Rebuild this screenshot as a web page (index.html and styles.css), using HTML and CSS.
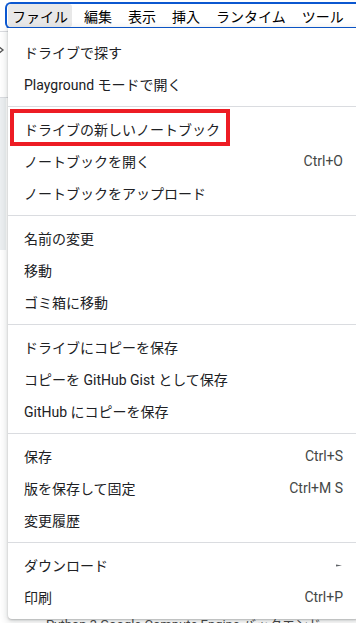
FILE: index.html
```html
<!DOCTYPE html>
<html lang="ja">
  <head>
    <meta charset="UTF-8" />
    <meta name="viewport" content="width=device-width, initial-scale=1.0" />
    <title>ファイル メニュー</title>
    <link rel="stylesheet" href="styles.css">
  </head>
  <body>
    <div class="menubar">
      <div class="menubar-item active">ファイル</div>
      <div class="menubar-item">編集</div>
      <div class="menubar-item">表示</div>
      <div class="menubar-item">挿入</div>
      <div class="menubar-item">ランタイム</div>
      <div class="menubar-item">ツール</div>
    </div>

    <div class="workspace">
      <div class="side">
        <div class="side-top">
          <svg width="8" height="10" viewBox="0 0 8 10"><polyline points="0,1 5,5 0,9" fill="none" stroke="#555" stroke-width="1.3" /></svg>
        </div>
        <div class="side-strip"></div>
      </div>
      <div class="sheet"></div>
      <div class="status">Python 3 Google Compute Engine バックエンド</div>
    </div>

    <div class="menu">
      <div class="menu-item">ドライブで探す</div>
      <div class="menu-item">Playground モードで開く</div>
      <div class="menu-sep"></div>
      <div class="menu-item marked">ドライブの新しいノートブック</div>
      <div class="menu-item">ノートブックを開く<span class="shortcut">Ctrl+O</span></div>
      <div class="menu-item">ノートブックをアップロード</div>
      <div class="menu-sep"></div>
      <div class="menu-item">名前の変更</div>
      <div class="menu-item">移動</div>
      <div class="menu-item">ゴミ箱に移動</div>
      <div class="menu-sep"></div>
      <div class="menu-item">ドライブにコピーを保存</div>
      <div class="menu-item">コピーを GitHub Gist として保存</div>
      <div class="menu-item">GitHub にコピーを保存</div>
      <div class="menu-sep"></div>
      <div class="menu-item">保存<span class="shortcut">Ctrl+S</span></div>
      <div class="menu-item">版を保存して固定<span class="shortcut">Ctrl+M S</span></div>
      <div class="menu-item">変更履歴</div>
      <div class="menu-sep"></div>
      <div class="menu-item">ダウンロード
        <svg class="submenu" width="6" height="5" viewBox="0 0 6 5"><polygon points="0,1.5 6,2.5 0,3.5" fill="#5f6368" /></svg>
      </div>
      <div class="menu-item">印刷<span class="shortcut">Ctrl+P</span></div>
    </div>
  </body>
</html>
```

FILE: styles.css
```css
body {
  margin: 0;
  height: 623px;
  overflow: hidden;
  background-color: white;
  font-family: Roboto, "Noto Sans CJK JP", sans-serif;
  font-size: 14px;
  color: #202124;
}
.menubar {
  box-sizing: border-box;
  height: 27px;
  margin: 2px 0 0 5px;
  padding-left: 1px;
  border: 2px solid #0b57d0;
  border-right: none;
  border-radius: 6px 0 0 6px;
  display: flex;
  gap: 8px;
}
.menubar-item {
  padding: 0 4px;
  display: flex;
  align-items: center;
  color: #000;
  border-radius: 3px;
}
.menubar-item.active {
  background-color: #e8e8e8;
}
.workspace {
  margin-top: 2px;
  border-top: 1px solid #dadce0;
  position: relative;
}
.side {
  width: 8px;
}
.side-top {
  height: 66px;
  border-bottom: 1px solid #dadce0;
  padding-top: 13px;
  box-sizing: border-box;
  margin-left: -2px;
}
.side-top svg {
  display: block;
}
.side-strip {
  width: 6px;
  height: 152px;
  background-color: #eceff1;
}
.sheet {
  height: 366px;
}
.status {
  padding-left: 46px;
  font-size: 13px;
  line-height: 18px;
  color: #444;
}
.menu {
  position: absolute;
  top: 28px;
  left: 8px;
  width: 351px;
  padding: 8px 0 6px;
  background-color: white;
  border-radius: 0 0 4px 4px;
  box-shadow: 0 1px 2px rgba(60, 64, 67, 0.3), 0 2px 6px 2px rgba(60, 64, 67, 0.15);
}
.menu-item {
  position: relative;
  height: 32px;
  padding: 0 16px;
  display: flex;
  align-items: center;
  justify-content: space-between;
  white-space: nowrap;
}
.shortcut {
  color: #444746;
}
.submenu {
  margin-right: 1px;
}
.menu-sep {
  height: 1px;
  margin: 6px 0;
  background-color: #dadce0;
}
.marked::after {
  content: "";
  position: absolute;
  left: 2px;
  top: -4px;
  width: 220px;
  height: 37px;
  box-sizing: border-box;
  border: 4px solid #ed1c24;
}
```
